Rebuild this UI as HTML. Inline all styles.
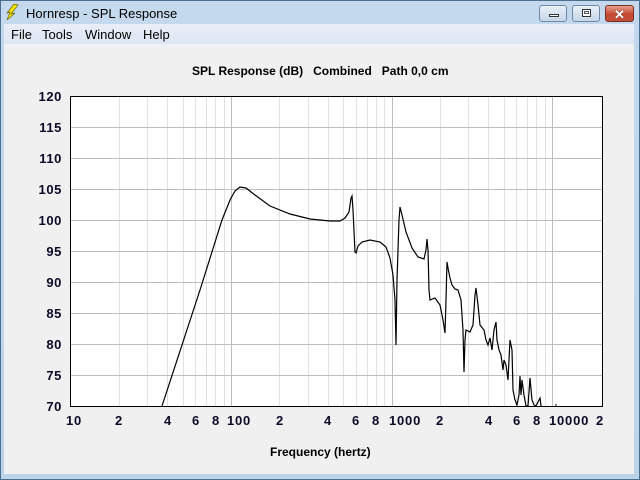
<!DOCTYPE html>
<html><head><meta charset="utf-8"><style>
*{margin:0;padding:0;box-sizing:border-box}
body{width:640px;height:480px;overflow:hidden;background:#6fa3c9;font-family:"Liberation Sans",sans-serif;position:relative}
.win{position:absolute;left:0;top:0;width:640px;height:480px;border:1px solid #4a6f8f;background:linear-gradient(#c4d9ee,#bcd3ea)}
.title{position:absolute;left:26px;top:6px;font-size:13px;color:#000}
.btn{position:absolute;top:5px;height:17px;border:1px solid #6e8aa8;border-radius:3px;background:linear-gradient(#e8f0f8,#c7d6e6)}
.menu{position:absolute;left:4px;top:24px;width:630px;height:20px;background:linear-gradient(#e9eef7,#dde6f3);font-size:13px}
.menu span{position:absolute;top:3px}
.client{position:absolute;left:4px;top:44px;width:630px;height:430px;background:#f0f0f0}
.t{position:absolute;font-weight:bold;font-size:12px;color:#000;white-space:pre}
.yl{position:absolute;right:578px;font-weight:bold;font-size:13px;color:#0a0a28;letter-spacing:0.6px}
.xl{position:absolute;top:413px;font-weight:bold;font-size:13px;color:#0a0a28;letter-spacing:0.8px}
</style></head><body>
<div class="win"></div>
<svg style="position:absolute;left:5px;top:4px" width="14" height="16"><path d="M9 0 L13 1 L6 10 L10 9 L2 16 L5 8 L2 9 Z" fill="#f4e400" stroke="#6b6200" stroke-width="0.7"/></svg>
<div class="title">Hornresp - SPL Response</div>
<div class="btn" style="left:539px;width:28px"><div style="position:absolute;left:9px;top:8px;width:10px;height:3px;background:#fff;border:1px solid #333"></div></div>
<div class="btn" style="left:572px;width:28px"><div style="position:absolute;left:9px;top:3px;width:9px;height:8px;border:1px solid #333;background:#fff"></div><div style="position:absolute;left:11px;top:5px;width:5px;height:3px;border:1px solid #555"></div></div>
<div class="btn" style="left:605px;width:29px;border-color:#7a2e22;background:linear-gradient(#e5a190,#c6482f 55%,#c0503a)"><div style="position:absolute;left:8px;top:1px;color:#fff;font-weight:bold;font-size:13px;text-shadow:0 0 1px #333">✕</div></div>
<div class="menu"><span style="left:7px">File</span><span style="left:38px">Tools</span><span style="left:81px">Window</span><span style="left:139px">Help</span></div>
<div class="client"></div>
<div class="t" style="left:192px;top:64px">SPL Response (dB)   Combined   Path 0,0 cm</div>
<div class="t" style="left:270px;top:445px">Frequency (hertz)</div>
<div class="yl" style="top:89px">120</div>
<div class="yl" style="top:120px">115</div>
<div class="yl" style="top:151px">110</div>
<div class="yl" style="top:182px">105</div>
<div class="yl" style="top:213px">100</div>
<div class="yl" style="top:244px">95</div>
<div class="yl" style="top:275px">90</div>
<div class="yl" style="top:306px">85</div>
<div class="yl" style="top:337px">80</div>
<div class="yl" style="top:368px">75</div>
<div class="yl" style="top:399px">70</div>
<div class="xl" style="left:66px">10</div>
<div class="xl" style="left:115px">2</div>
<div class="xl" style="left:164px">4</div>
<div class="xl" style="left:192px">6</div>
<div class="xl" style="left:212px">8</div>
<div class="xl" style="left:227px">100</div>
<div class="xl" style="left:276px">2</div>
<div class="xl" style="left:324px">4</div>
<div class="xl" style="left:352px">6</div>
<div class="xl" style="left:372px">8</div>
<div class="xl" style="left:389px">1000</div>
<div class="xl" style="left:436px">2</div>
<div class="xl" style="left:485px">4</div>
<div class="xl" style="left:513px">6</div>
<div class="xl" style="left:533px">8</div>
<div class="xl" style="left:549px">10000</div>
<div class="xl" style="left:596px">2</div>
<svg style="position:absolute;left:0;top:0" width="640" height="480">
<rect x="70.5" y="96.5" width="532" height="310" fill="#fff"/>
<g stroke="#e0e0e0" stroke-width="1">
<path d="M119.5 97V406M147.5 97V406M167.5 97V406M183.5 97V406M195.5 97V406M206.5 97V406M215.5 97V406M224.5 97V406M279.5 97V406M308.5 97V406M328.5 97V406M343.5 97V406M356.5 97V406M367.5 97V406M376.5 97V406M384.5 97V406M440.5 97V406M468.5 97V406M488.5 97V406M504.5 97V406M516.5 97V406M527.5 97V406M536.5 97V406M545.5 97V406"/>
</g>
<g stroke="#bdbdbd" stroke-width="1">
<path d="M231.5 97V406M392.5 97V406M552.5 97V406"/>
<path d="M71 127.5H602M71 158.5H602M71 189.5H602M71 220.5H602M71 251.5H602M71 282.5H602M71 313.5H602M71 344.5H602M71 375.5H602"/>
</g>
<rect x="70.5" y="96.5" width="532" height="310" fill="none" stroke="#000" stroke-width="1"/>
<polyline fill="none" stroke="#000" stroke-width="1.2" points="162,406 200,290 222,220 230,200 235,191 240,187 246,188 255,195 270,206 290,214 310,219 330,221 340,221 345,218 349,212 351,198 352,196 353,210 355,252 356,253 358,246 362,242 370,240 380,242 386,247 390,258 393,275 395,300 396,345 397,280 398,250 399,220 400,207 402,215 406,232 412,248 418,257 424,259 426,250 427,239 428,250 429,290 430,300 435,298 440,305 443,320 445,333 446,300 447,262 448,268 450,278 452,285 455,289 458,290 461,300 463,330 464,372 465,340 466,330 470,332 473,325 475,295 476,288 478,305 480,325 484,330 486,340 488,345 490,338 492,350 494,330 496,322 497,340 499,350 501,355 503,370 504,360 506,365 508,380 510,340 512,350 513,390 515,400 517,405 519,395 520,376 521,395 522,380 524,395 526,406 528,406 530,378 532,400 534,405 536,406 540,398 541,406"/>
<path d="M556 404V406" stroke="#000"/>
</svg>
</body></html>
